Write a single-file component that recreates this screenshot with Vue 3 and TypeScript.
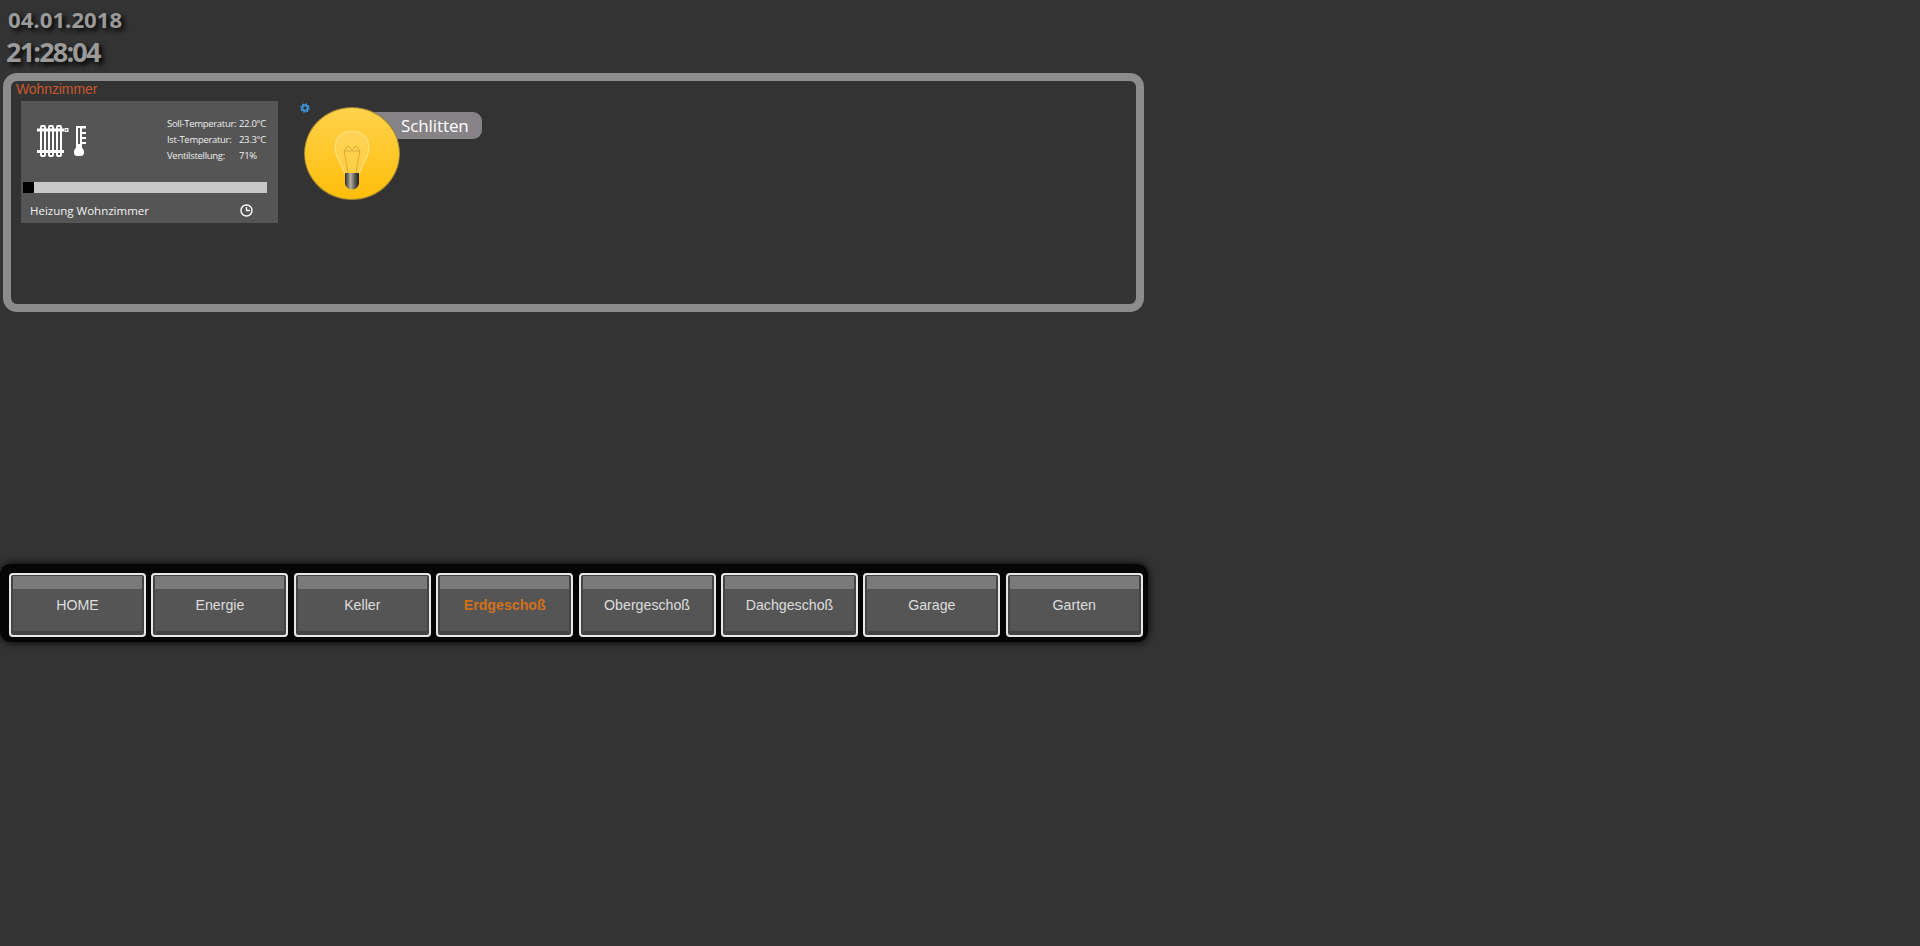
<script setup lang="ts">
const menu = ['HOME', 'Energie', 'Keller', 'Erdgeschoß', 'Obergeschoß', 'Dachgeschoß', 'Garage', 'Garten']
const active = 'Erdgeschoß'
const temps = [
  { label: 'Soll-Temperatur:', value: '22.0°C' },
  { label: 'Ist-Temperatur:', value: '23.3°C' },
  { label: 'Ventilstellung:', value: '71%' },
]
</script>

<template>
  <div class="page">
    <header class="clock">
      <div class="date">04.01.2018</div>
      <div class="time">21:28:04</div>
    </header>

    <section class="room">
      <div class="room-title">Wohnzimmer</div>
      <div class="room-body">
        <div class="heating">
          <div class="heating-top">
            <div class="heating-icons">
              <svg width="32" height="32" viewBox="0 0 32 32">
                <g fill="none" stroke="#fff" stroke-width="2">
                  <rect x="4" y="1" width="4" height="30" rx="1" />
                  <rect x="12" y="1" width="4" height="30" rx="1" />
                  <rect x="20" y="1" width="4" height="30" rx="1" />
                </g>
                <g fill="#fff">
                  <rect x="0" y="3.500" width="27" height="3" />
                  <rect x="0" y="25" width="27" height="3" />
                  <path d="M27.500 3h4v4h-4zM28.700 4.200v1.600h1.600V4.200z" />
                </g>
              </svg>
              <svg width="13" height="32" viewBox="0 0 13 32">
                <path fill="#fff" d="M2 1h10v2.500H8V7h4v2H8v3h4v2H8v3h4v2H8v4c1.500 1 2 2 2 4 0 3-1 4-4 4H4c-3 0-4-1-4-4 0-2 .5-3 2-4zM4 3v16h2V3z" />
              </svg>
            </div>
            <div class="heating-values">
              <div v-for="t in temps" :key="t.label" class="value-row">
                <span class="value-label">{{ t.label }}</span>
                <span>{{ t.value }}</span>
              </div>
            </div>
          </div>
          <div class="valve"><div class="valve-knob"></div></div>
          <div class="heating-foot">
            <span>Heizung Wohnzimmer</span>
            <svg width="13" height="13" viewBox="0 0 13 13">
              <circle cx="6.500" cy="6.500" r="5.500" fill="none" stroke="#fff" stroke-width="1.400" />
              <path d="M6.500 3V6.500H10" fill="none" stroke="#fff" stroke-width="1.300" />
            </svg>
          </div>
        </div>

        <div class="lamp">
          <svg class="gear" width="10" height="10" viewBox="0 0 10 10">
            <circle cx="5" cy="5" r="2.800" fill="none" stroke="#3f93d8" stroke-width="2" />
            <circle cx="5" cy="5" r="4" fill="none" stroke="#3f93d8" stroke-width="1.600" stroke-dasharray="1.500 1.640" />
          </svg>
          <div class="lamp-label">Schlitten</div>
          <div class="lamp-bulb">
            <svg width="36" height="60" viewBox="0 0 36 60">
              <defs>
                <linearGradient id="socket" x1="0" x2="1" y1="0" y2="0">
                  <stop offset="0" stop-color="#2c2a24" />
                  <stop offset="0.4" stop-color="#b5b2a2" />
                  <stop offset="0.7" stop-color="#5e5c52" />
                  <stop offset="1" stop-color="#1e1d1a" />
                </linearGradient>
              </defs>
              <path d="M18 1C8 1 1 8 1 18c0 9 6 14 9 23l1 3h14l1-3c3-9 9-14 9-23C35 8 28 1 18 1z" fill="#ffe690" fill-opacity="0.32" stroke="#ffeeb8" stroke-opacity="0.55" stroke-width="1.200" />
              <path d="M14 43L10 21l4-5 4 4 4-4 4 5-4 22M10 21h16" fill="none" stroke="#a98a2c" stroke-opacity="0.5" />
              <path d="M11 43h14v10c0 3-3 6.500-7 6.500s-7-3.500-7-6.500z" fill="url(#socket)" />
            </svg>
          </div>
        </div>
      </div>
    </section>

    <nav class="menu">
      <div v-for="item in menu" :key="item" class="menu-btn" :class="{ active: item === active }">
        <div class="menu-stripe"></div>
        <div class="menu-text">{{ item }}</div>
      </div>
    </nav>
  </div>
</template>

<style>
html,
body {
  background: #333333;
}
</style>

<style scoped>
.page {
  width: 1920px;
  height: 946px;
  overflow: hidden;
  background: #333333;
}

.clock {
  height: 73px;
  padding-left: 8px;
  box-sizing: border-box;
  font-family: "Open Sans", sans-serif;
  font-weight: 700;
  color: #9a9a9a;
}
.date {
  padding-top: 5px;
  font-size: 22.200px;
  line-height: 30px;
  text-shadow: 3px 3px 5px #000;
}
.time {
  margin-left: -2px;
  font-size: 27px;
  line-height: 34px;
  letter-spacing: -1.800px;
  text-shadow: 3px 3px 5px #000;
}

.room {
  width: 1141px;
  height: 239px;
  margin-left: 3px;
  box-sizing: border-box;
  border: 8px solid #8c8c8c;
  border-radius: 14px;
}
.room-title {
  margin-left: 5px;
  font-family: "Liberation Sans", Arial, sans-serif;
  font-size: 14px;
  line-height: 16px;
  letter-spacing: -0.100px;
  color: #c8582e;
}
.room-body {
  display: flex;
  margin-left: 10px;
  margin-top: 4px;
}

.heating {
  width: 257px;
  height: 122px;
  background: #555555;
  color: #fff;
  font-family: "Open Sans", sans-serif;
}
.heating-top {
  display: flex;
  justify-content: space-between;
  height: 81px;
  padding: 15px 12px 0 16px;
  box-sizing: border-box;
}
.heating-icons {
  display: flex;
  gap: 5px;
  height: 32px;
  margin-top: 9px;
}
.heating-values {
  width: 99px;
  font-size: 9.500px;
  line-height: 16px;
  letter-spacing: -0.300px;
  color: #eeeeee;
  white-space: nowrap;
}
.value-row {
  display: flex;
}
.value-label {
  width: 72px;
}
.valve {
  width: 244px;
  height: 11px;
  margin-left: 2px;
  background: #c8c8c8;
}
.valve-knob {
  width: 11px;
  height: 11px;
  background: #000;
}
.heating-foot {
  display: flex;
  justify-content: space-between;
  align-items: center;
  height: 30px;
  box-sizing: border-box;
  padding: 5px 25px 0 9px;
  font-size: 11.500px;
  color: #f2f2f2;
}

.lamp {
  position: relative;
  width: 190px;
  height: 100px;
  margin-left: 26px;
  margin-top: 6px;
}
.gear {
  position: absolute;
  left: -4px;
  top: -4px;
}
.lamp-label {
  position: absolute;
  left: 50px;
  top: 5px;
  width: 128px;
  height: 27px;
  box-sizing: border-box;
  padding-left: 47px;
  border-radius: 0 9px 9px 0;
  background: #858385;
  color: #fff;
  font-family: "Open Sans", sans-serif;
  font-size: 17px;
  line-height: 28px;
  letter-spacing: -0.100px;
}
.lamp-bulb {
  position: absolute;
  left: 0;
  top: 0;
  width: 94px;
  height: 91px;
  display: flex;
  align-items: flex-end;
  justify-content: center;
  border: 1px solid #9c8433;
  border-radius: 50%;
  background: linear-gradient(#ffd24c, #ffbe0a);
}
.lamp-bulb svg {
  margin-bottom: 9px;
}

.menu {
  display: grid;
  grid-template-columns: repeat(8, 137px);
  column-gap: 5.400px;
  width: 1148px;
  height: 78px;
  margin-top: 252px;
  padding: 9px 0 0 9px;
  box-sizing: border-box;
  border-radius: 11px;
  background: #050505;
  box-shadow: 0 0 9px #000;
}
.menu-btn {
  height: 64px;
  box-sizing: border-box;
  border: 2px solid #e8e8e8;
  border-radius: 4px;
  padding: 1px;
  display: flex;
  flex-direction: column;
  background: #444444;
}
.menu-stripe {
  height: 13px;
  margin: 0 1px;
  background: #7a7a7a;
  flex: none;
}
.menu-text {
  height: 42px;
  margin: 0 1px;
  background: #555555;
  color: #dddddd;
  text-align: center;
  font-family: "Liberation Sans", Arial, sans-serif;
  font-size: 14.200px;
  line-height: 33px;
}
.menu-btn.active .menu-text {
  color: #d2701a;
  font-weight: 700;
}
</style>
